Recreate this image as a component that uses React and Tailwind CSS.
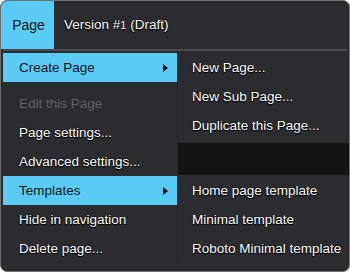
import React from "react";

const shadow = "[text-shadow:0_0_1px_#000,0_0_1px_#000,0_1px_1px_#000]";

function Arrow() {
  return (
    <svg width="5" height="8" viewBox="0 0 5 8" className="mr-[9px]">
      <path d="M0 0 L5 4 L0 8 Z" fill="#111" />
    </svg>
  );
}

function Item({ label, active, disabled, arrow, pl = "pl-[16px]" }) {
  return (
    <div
      className={
        "h-[29px] flex items-center justify-between " +
        pl +
        " " +
        (active
          ? "bg-[#5acbf7] text-[#151515]"
          : disabled
          ? "text-[#5f6064]"
          : "text-white " + shadow)
      }
    >
      <span>{label}</span>
      {arrow && <Arrow />}
    </div>
  );
}

export default function App() {
  return (
    <div
      className="w-[350px] h-[272px] bg-white text-[13.5px] leading-none"
      style={{ fontFamily: '"Liberation Sans", Arial, sans-serif' }}
    >
      <div className="w-full h-full rounded-[7px] border border-[#6e6e70] bg-[#2b2c30] overflow-hidden flex flex-col">
        <div className="h-[48px] flex items-stretch shrink-0">
          <div className="w-[53px] bg-[#5acbf7] text-[#151515] flex items-center justify-center pl-[2px] text-[14px]">
            Page
          </div>
          <div className={"flex items-center pl-[10px] text-white text-[13.5px] " + shadow}>
            Version #<span className="text-[11px]">1</span>&nbsp;(Draft)
          </div>
        </div>
        <div className="h-[2px] mx-[2px] bg-[#4a4b50] shrink-0" />
        <div className="flex pt-[2px]">
          <div className="w-[176px] pl-[2px] flex flex-col">
            <Item label="Create Page" active arrow />
            <div className="h-[7px]" />
            <Item label="Edit this Page" disabled />
            <Item label="Page settings..." />
            <Item label="Advanced settings..." />
            <Item label="Templates" active arrow />
            <Item label="Hide in navigation" />
            <Item label="Delete page..." />
          </div>
          <div className="w-px self-stretch bg-[#242528]" />
          <div className="flex-1 flex flex-col">
            <Item label="New Page..." pl="pl-[14px]" />
            <Item label="New Sub Page..." pl="pl-[14px]" />
            <Item label="Duplicate this Page..." pl="pl-[14px]" />
            <div className="h-[32px] mt-[3px] bg-[#141414]" />
            <div className="h-px" />
            <Item label="Home page template" pl="pl-[14px]" />
            <Item label="Minimal template" pl="pl-[14px]" />
            <Item label="Roboto Minimal template" pl="pl-[14px]" />
          </div>
        </div>
      </div>
    </div>
  );
}
